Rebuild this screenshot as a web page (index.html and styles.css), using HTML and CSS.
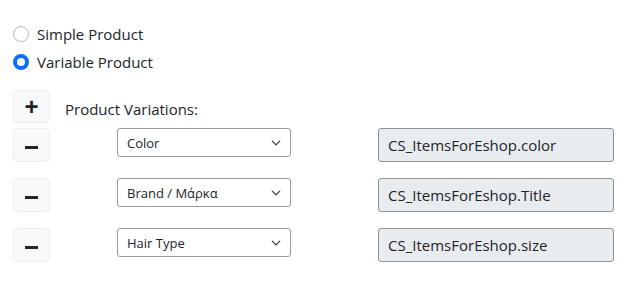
FILE: index.html
```html
<!DOCTYPE html>
<html lang="en">
<head>
    <meta charset="UTF-8">
    <meta name="viewport" content="width=device-width, initial-scale=1.0">
    <title>Product Type</title>
    <link rel="stylesheet" href="styles.css">
</head>
<body>

<div class="container">
    <!-- Tipo de produto -->
    <div class="options">
        <label class="option">
            <input type="radio" name="type" value="simple">
            <span>Simple Product</span>
        </label>
        <label class="option">
            <input type="radio" name="type" value="variable" checked>
            <span>Variable Product</span>
        </label>
    </div>

    <div class="variations-head">
        <button class="btn">+</button>
        <span class="variations-title">Product Variations:</span>
    </div>

    <div class="variation">
        <button class="btn"><span class="minus"></span></button>
        <select class="select">
            <option>Color</option>
        </select>
        <input type="text" class="field" value="CS_ItemsForEshop.color" disabled>
    </div>

    <div class="variation">
        <button class="btn"><span class="minus"></span></button>
        <select class="select">
            <option>Brand / Μάρκα</option>
        </select>
        <input type="text" class="field" value="CS_ItemsForEshop.Title" disabled>
    </div>

    <div class="variation">
        <button class="btn"><span class="minus"></span></button>
        <select class="select">
            <option>Hair Type</option>
        </select>
        <input type="text" class="field" value="CS_ItemsForEshop.size" disabled>
    </div>
</div>

</body>
</html>
```

FILE: styles.css
```css
body {
    font-family: "Open Sans", "Noto Sans", sans-serif;
    margin: 0;
    padding: 0;
    background-color: white;
    color: #212529;
}
.container {
    padding: 22px 13px 0 13px;
}
.options {
    display: flex;
    flex-direction: column;
    gap: 4px;
}
.option {
    display: flex;
    align-items: center;
    gap: 8px;
    height: 24px;
    font-size: 15px;
}
.option input {
    appearance: none;
    width: 16px;
    height: 16px;
    margin: 0;
    border: 1px solid #b7bcc1;
    border-radius: 50%;
    background-color: white;
}
.option input:checked {
    border: 4px solid #0d6efd;
    background-color: white;
}
.variations-head {
    display: flex;
    align-items: center;
    margin-top: 16px;
    gap: 15px;
}
.variations-title {
    font-size: 15px;
    margin-top: 4px;
}
.btn {
    display: flex;
    align-items: center;
    justify-content: center;
    width: 37px;
    height: 33px;
    padding: 0;
    background-color: #f8f9fa;
    border: 1px solid #eceef0;
    border-radius: 4px;
    font-family: "Liberation Sans", sans-serif;
    font-size: 24px;
    font-weight: bold;
    line-height: 1;
    color: #212529;
}
.minus {
    display: block;
    width: 13px;
    height: 3px;
    margin-top: 5px;
    background-color: #212529;
}
.variation {
    display: flex;
    align-items: flex-start;
    margin-top: 5px;
}
.variation + .variation {
    margin-top: 16px;
}
.variation .btn {
    height: 34px;
}
.select {
    appearance: none;
    margin-left: 67px;
    width: 174px;
    height: 29px;
    padding: 0 30px 0 9px;
    border: 1px solid #9a9da0;
    border-radius: 3px;
    font-family: inherit;
    font-size: 13px;
    color: #212529;
    background-color: white;
    background-image: url("data:image/svg+xml,%3Csvg xmlns='http://www.w3.org/2000/svg' viewBox='0 0 16 16'%3E%3Cpath fill='none' stroke='%23343a40' stroke-linecap='round' stroke-linejoin='round' stroke-width='2' d='M2 5l6 6 6-6'/%3E%3C/svg%3E");
    background-repeat: no-repeat;
    background-position: right 8px center;
    background-size: 12px 10px;
}
.field {
    margin-left: 87px;
    width: 236px;
    height: 34px;
    box-sizing: border-box;
    padding: 0 9px;
    border: 1px solid #8f9295;
    border-radius: 3px;
    background-color: #e9ecef;
    font-family: inherit;
    font-size: 15px;
    color: #212529;
}
```
